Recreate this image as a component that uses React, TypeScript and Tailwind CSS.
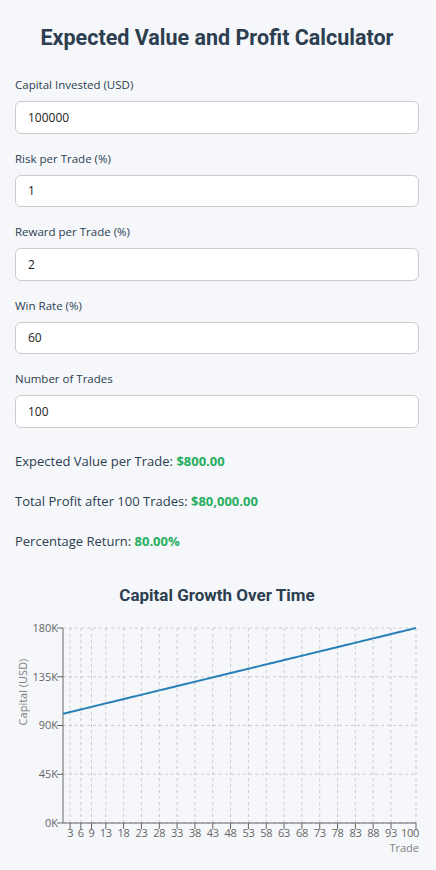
import React from 'react';

const fields = [
  { label: 'Capital Invested (USD)', value: '100000' },
  { label: 'Risk per Trade (%)', value: '1' },
  { label: 'Reward per Trade (%)', value: '2' },
  { label: 'Win Rate (%)', value: '60' },
  { label: 'Number of Trades', value: '100' },
];

// chart geometry, in svg coordinates
const L = 63;
const R = 416;
const T = 18;
const B = 213;
const MAX = 180000;
const N = 100;

const xAt = (trade: number) => L + ((trade - 1) * (R - L)) / (N - 1);
const yAt = (v: number) => B - (v / MAX) * (B - T);

const xTicks = [3, 6, 9, 13, 18, 23, 28, 33, 38, 43, 48, 53, 58, 63, 68, 73, 78, 83, 88, 93, 100];
const yTicks = [0, 45000, 90000, 135000, 180000];

function Chart() {
  const points = Array.from({ length: N }, (_, i) => {
    const t = i + 1;
    return `${xAt(t).toFixed(2)},${yAt(100000 + t * 800).toFixed(2)}`;
  }).join(' ');

  return (
    <svg width="436" height="250" className="block" style={{ fontFamily: '"Open Sans", sans-serif' }}>
      {/* grid */}
      <g stroke="#ccc" strokeDasharray="3 3" strokeWidth="1">
        {yTicks.map((v) => (
          <line key={v} x1={L} x2={R} y1={yAt(v)} y2={yAt(v)} />
        ))}
        {xTicks.map((t) => (
          <line key={t} x1={xAt(t)} x2={xAt(t)} y1={T} y2={B} />
        ))}
      </g>

      {/* y axis */}
      <line x1={L} x2={L} y1={T} y2={B} stroke="#666" />
      {yTicks.map((v) => (
        <g key={v}>
          <line x1={L - 6} x2={L} y1={yAt(v)} y2={yAt(v)} stroke="#666" />
          <text x={L - 5} y={yAt(v)} dy="0.355em" textAnchor="end" fontSize="11" fill="#666">
            {v / 1000}K
          </text>
        </g>
      ))}
      <text
        transform={`translate(23, 82) rotate(-90)`}
        textAnchor="middle"
        dy="0.355em"
        fontSize="11"
        fill="#808080"
      >
        Capital (USD)
      </text>

      {/* x axis */}
      <line x1={L} x2={R} y1={B} y2={B} stroke="#666" />
      {xTicks.map((t) => {
        const last = t === 100;
        return (
          <g key={t}>
            <line x1={xAt(t)} x2={xAt(t)} y1={B} y2={B + 6} stroke="#666" />
            <text
              x={last ? 419 : xAt(t)}
              y={B + 6}
              dy="0.71em"
              textAnchor={last ? 'end' : 'middle'}
              fontSize="11"
              letterSpacing="-0.3"
              fill="#666"
            >
              {t}
            </text>
          </g>
        );
      })}
      <text x={419} y={B + 21} dy="0.71em" textAnchor="end" fontSize="11" fill="#808080">
        Trade
      </text>

      <polyline points={points} fill="none" stroke="#2980b9" strokeWidth="2" />
    </svg>
  );
}

export default function App() {
  return (
    <div
      className="min-h-[870px] bg-[#f5f7fa] text-[#333]"
      style={{ fontFamily: '"Open Sans", sans-serif' }}
    >
      <div className="pl-[15px] pr-[17px] pt-[24px]">
        <h1
          className="text-center text-[21.5px] leading-[28px] font-bold text-[#2c3e50]"
          style={{ fontFamily: 'Roboto, sans-serif' }}
        >
          Expected Value and Profit Calculator
        </h1>

        <div className="mt-[25px]">
          {fields.map((f) => (
            <div key={f.label} className="mb-[17px]">
              <label className="block h-[16px] text-[11.5px] leading-[16px] font-medium text-[#2c3e50]">
                {f.label}
              </label>
              <input
                readOnly
                value={f.value}
                className="mt-[8px] block w-full h-[32.5px] px-[12px] rounded-[6px] border border-[#ccc] bg-white text-[12px] text-[#222] outline-none"
              />
            </div>
          ))}
        </div>

        <div className="mt-[23px] text-[13px] leading-[20px] text-[#2c3e50]">
          <p>
            Expected Value per Trade: <span className="font-bold text-[#27ae60]">$800.00</span>
          </p>
          <p className="mt-[20px]">
            Total Profit after 100 Trades: <span className="font-bold text-[#27ae60]">$80,000.00</span>
          </p>
          <p className="mt-[20px]">
            Percentage Return: <span className="font-bold text-[#27ae60]">80.00%</span>
          </p>
        </div>

        <h2
          className="mt-[32px] text-center text-[17px] leading-[24px] font-bold text-[#2c3e50]"
          style={{ fontFamily: 'Roboto, sans-serif' }}
        >
          Capital Growth Over Time
        </h2>
      </div>
      <div className="mt-[3px]">
        <Chart />
      </div>
    </div>
  );
}
